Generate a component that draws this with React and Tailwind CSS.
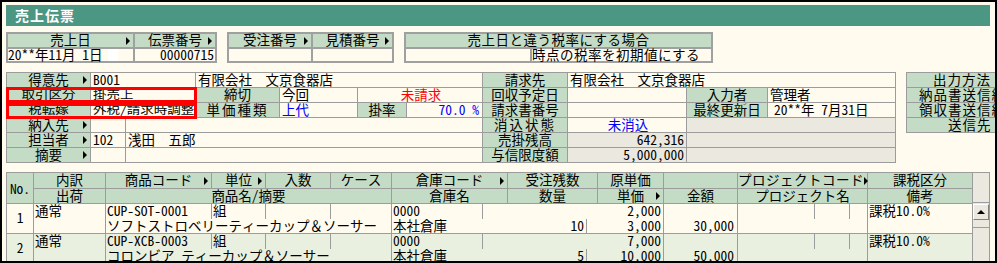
import React from 'react';

const Arrow = () => (
  <span className="block w-0 h-0 border-y-[4px] border-y-transparent border-l-[4px] border-l-black" />
);

const S = ({ children }) => <span className="inline-block scale-y-[0.8]">{children}</span>;

function H({ children, arrow = false, className = '' }) {
  return (
    <div className={`grid grid-cols-[1fr_auto_1fr] items-start bg-[#c4dcc6] whitespace-nowrap ${className}`}>
      <span />
      <span>{children}</span>
      <span className="self-center flex justify-end pr-[3px]">{arrow ? <Arrow /> : null}</span>
    </div>
  );
}

function V({ children, className = '' }) {
  return <div className={`bg-[#fffbef] pl-[2px] whitespace-nowrap overflow-hidden ${className}`}>{children}</div>;
}

function G({ children, className = '' }) {
  return <div className={`bg-[#ebe8df] whitespace-nowrap overflow-hidden ${className}`}>{children}</div>;
}

function DataRow({ no, code, unit, name, whCode, whName, qty, cost, price, amount, tax, bg }) {
  return (
    <>
      <div className={`${bg} flex items-center justify-center leading-[13px] pb-[3px]`}>{no}</div>
      <div className={`${bg} leading-[13px] pl-px whitespace-nowrap`}>通常</div>
      <div className={`${bg} col-span-4 flex flex-col overflow-hidden`}>
        <div className="h-[15px] flex leading-[13px] whitespace-nowrap">
          <div className="w-[106px] border-r border-[#9c9c9c] pl-px">{code}</div>
          <div className="w-[54px] border-r border-[#9c9c9c] pl-px">{unit}</div>
          <div className="w-[65px] border-r border-[#9c9c9c]" />
        </div>
        <div className="h-[14px] leading-[12px] pl-px whitespace-nowrap">{name}</div>
      </div>
      <div className={`${bg} col-span-3 flex flex-col overflow-hidden`}>
        <div className="h-[15px] flex leading-[13px] whitespace-nowrap">
          <div className="w-[91px] border-r border-[#9c9c9c] pl-px">{whCode}</div>
          <div className="flex-1 text-right pr-[2px]">{cost}</div>
        </div>
        <div className="h-[14px] flex leading-[12px] whitespace-nowrap">
          <div className="w-[195px] border-r border-[#9c9c9c] flex justify-between pl-px pr-[2px]">
            <span>{whName}</span>
            <span>{qty}</span>
          </div>
          <div className="flex-1 text-right pr-[2px]">{price}</div>
        </div>
      </div>
      <div className={`${bg} flex flex-col`}>
        <div className="h-[15px]" />
        <div className="h-[14px] leading-[12px] text-right pr-[3px]">{amount}</div>
      </div>
      <div className={`${bg} flex flex-col`}>
        <div className="h-[15px] flex">
          <div className="w-[77px] border-r border-[#9c9c9c]" />
          <div className="w-[35px] border-r border-[#9c9c9c]" />
        </div>
      </div>
      <div className={`${bg} leading-[13px] pl-px whitespace-nowrap`}>{tax}</div>
    </>
  );
}

export default function App() {
  return (
    <div className="w-[997px] h-[263px] overflow-hidden border-2 border-black bg-[#fffbef] pl-[4px] pt-[3px] text-[13.5px] text-black font-['Noto_Sans_Mono_CJK_JP','Noto_Sans_CJK_JP',monospace]">
      {/* title */}
      <div className="w-[984px] h-[21px] bg-[#4b9784] pl-[9px] text-white text-[14px] font-bold leading-[20px] tracking-[1px]">
        売上伝票
      </div>

      {/* top boxes */}
      <div className="flex gap-[10px] mt-[6px] leading-[11px]">
        <div className="grid grid-cols-[125px_80px] grid-rows-[13px_12px] gap-[2px] p-[2px] bg-[#a0a0a0]">
          <H arrow>売上日</H>
          <H arrow>伝票番号</H>
          <div className="bg-[#fffbef] flex items-start whitespace-nowrap leading-[10px]">
            20**年11月 1日
            <span className="ml-[5px] w-[10px] h-[12px] bg-white" />
          </div>
          <div className="bg-[#fffbef] text-right pr-px leading-[10px]">00000715</div>
        </div>
        <div className="grid grid-cols-[82px_79px] grid-rows-[13px_12px] gap-[2px] p-[2px] bg-[#a0a0a0]">
          <H arrow>受注番号</H>
          <H arrow>見積番号</H>
          <div className="bg-[#fffbef]" />
          <div className="bg-[#fffbef]" />
        </div>
        <div className="grid grid-cols-[124px_179px] grid-rows-[13px_12px] gap-[2px] p-[2px] bg-[#a0a0a0]">
          <H className="col-span-2 tracking-[0.5px]">売上日と違う税率にする場合</H>
          <div className="bg-[#fffbef]" />
          <div className="bg-[#fffbef] leading-[10px] whitespace-nowrap tracking-[0.5px]">時点の税率を初期値にする</div>
        </div>
      </div>

      {/* middle */}
      <div className="flex gap-[10px] mt-[9px] leading-[13px]">
        <div className="relative shrink-0">
          <div className="grid grid-cols-[83px_34px_69px_83px_77px_48px_75px_84px_118px_80px_127px] grid-rows-[repeat(6,14px)] gap-px p-px bg-[#9c9c9c]">
            {/* R1 */}
            <H arrow>得意先</H>
            <V className="col-span-2">B001</V>
            <V className="col-span-4">有限会社　文京食器店</V>
            <H>請求先</H>
            <V className="col-span-3">有限会社　文京食器店</V>
            {/* R2 */}
            <H><S>取引区分</S></H>
            <V className="col-span-2"><S>掛売上</S></V>
            <H>締切</H>
            <V>今回</V>
            <V className="col-span-2 text-center text-[#ff0000]">未請求</V>
            <H>回収予定日</H>
            <V />
            <H>入力者</H>
            <V>管理者</V>
            {/* R3 */}
            <H><S>税転嫁</S></H>
            <V className="col-span-2"><S>外税/請求時調整</S></V>
            <H className="tracking-[2px]">単価種類</H>
            <V className="text-[#0000ff]">上代</V>
            <H>掛率</H>
            <V className="text-right pr-[3px] text-[#0000ff]">70.0 %</V>
            <H>請求書番号</H>
            <V />
            <H>最終更新日</H>
            <V className="pl-[6px]">20**年 7月31日</V>
            {/* R4 */}
            <H arrow>納入先</H>
            <V />
            <V className="col-span-5" />
            <H className="tracking-[2px]">消込状態</H>
            <V className="text-center text-[#0000ff]">未消込</V>
            <G className="col-span-2" />
            {/* R5 */}
            <H arrow>担当者</H>
            <V>102</V>
            <V className="col-span-5">浅田　五郎</V>
            <H>売掛残高</H>
            <G className="text-right pr-[2px]">642,316</G>
            <G className="col-span-2" />
            {/* R6 */}
            <H arrow>摘要</H>
            <V />
            <V className="col-span-5" />
            <H>与信限度額</H>
            <G className="text-right pr-[2px]">5,000,000</G>
            <G className="col-span-2" />
          </div>
          <div className="absolute left-0 top-[15px] w-[191px] h-[16px] border-[3px] border-[#ff0000]" />
          <div className="absolute left-0 top-[31px] w-[191px] h-[16px] border-[3px] border-[#ff0000]" />
        </div>
        <div className="grid grid-rows-[repeat(4,14px)] gap-px p-px bg-[#9c9c9c] w-[110px] self-start shrink-0 whitespace-nowrap">
          <div className="bg-[#c4dcc6] pl-[26px] tracking-[1px]">出力方法</div>
          <div className="bg-[#c4dcc6] pl-[12px] tracking-[1px]">納品書送信紙</div>
          <div className="bg-[#c4dcc6] pl-[12px] tracking-[1px]">領収書送信紙</div>
          <div className="bg-[#c4dcc6] pl-[41px] tracking-[1px]">送信先</div>
        </div>
      </div>

      {/* table */}
      <div className="mt-[9px] w-max grid grid-cols-[26px_71px_105px_53px_64px_60px_115px_89px_65px_73px_129px_104px_16px] grid-rows-[15px_14px_29px_29px] gap-px p-px bg-[#9c9c9c]">
        <div className="row-span-2 bg-[#c4dcc6] flex items-center justify-center leading-[13px]">No.</div>
        <H className="leading-[13px]">内訳</H>
        <H className="leading-[13px]" arrow>商品コード</H>
        <H className="leading-[13px]" arrow>単位</H>
        <H className="leading-[13px]">入数</H>
        <H className="leading-[13px]">ケース</H>
        <H className="leading-[13px]" arrow>倉庫コード</H>
        <H className="leading-[13px]">受注残数</H>
        <H className="leading-[13px]">原単価</H>
        <H className="leading-[13px]" />
        <H className="leading-[13px] tracking-[0.5px]" arrow>プロジェクトコード</H>
        <H className="leading-[13px]">課税区分</H>
        <div className="row-span-4 flex flex-col bg-[#ebe8df]">
          <div className="h-[30px] border-b border-[#9c9c9c] bg-[#ebe8df]" />
          <div className="h-[16px] mt-px flex items-center justify-center bg-[#ebe8df] border-t border-l border-t-white border-l-white border-b border-r border-b-[#808080] border-r-[#808080]">
            <span className="block w-0 h-0 border-x-[4px] border-x-transparent border-b-[4px] border-b-black" />
          </div>
          <div className="h-[8px] border-b border-[#9c9c9c]" />
          <div className="flex-1 bg-[#ebe8df]" />
        </div>

        <H className="leading-[12px]">出荷</H>
        <H className="leading-[12px] col-span-4">商品名/摘要</H>
        <H className="leading-[12px]">倉庫名</H>
        <H className="leading-[12px]">数量</H>
        <H className="leading-[12px]" arrow>単価</H>
        <H className="leading-[12px]">金額</H>
        <H className="leading-[12px]">プロジェクト名</H>
        <H className="leading-[12px]">備考</H>

        <DataRow
          bg="bg-[#fffbef]"
          no="1"
          code="CUP-SOT-0001"
          unit="組"
          name="ソフトストロベリーティーカップ＆ソーサー"
          whCode="0000"
          whName="本社倉庫"
          qty="10"
          cost="2,000"
          price="3,000"
          amount="30,000"
          tax="課税10.0%"
        />
        <DataRow
          bg="bg-[#eaf0df]"
          no="2"
          code="CUP-XCB-0003"
          unit="組"
          name="コロンビア ティーカップ＆ソーサー"
          whCode="0000"
          whName="本社倉庫"
          qty="5"
          cost="7,000"
          price="10,000"
          amount="50,000"
          tax="課税10.0%"
        />
      </div>
    </div>
  );
}
